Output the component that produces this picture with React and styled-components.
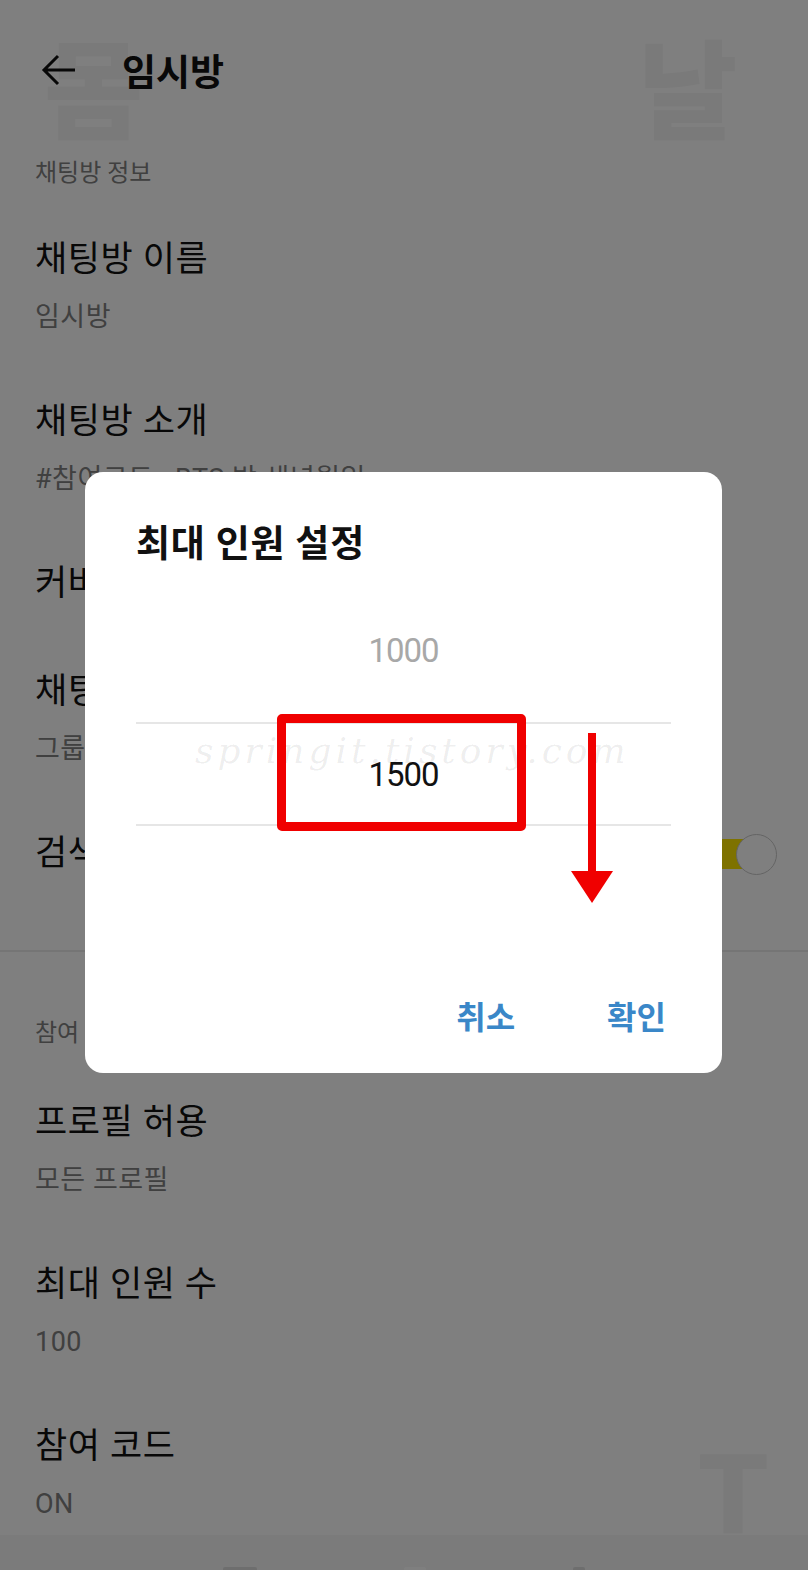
import * as React from "react";
import styled, { createGlobalStyle } from "styled-components";

const GlobalStyle = createGlobalStyle`
  html, body {
    margin: 0;
    padding: 0;
    background: #808080;
  }
  * {
    box-sizing: border-box;
  }
`;

const font = `Roboto, "Noto Sans CJK KR", "Noto Sans", sans-serif`;

const Screen = styled.div`
  position: relative;
  width: 808px;
  height: 1570px;
  overflow: hidden;
  background: #ffffff;
  font-family: ${font};
  color: #111111;
`;

const Header = styled.header`
  height: 140px;
  display: flex;
  align-items: center;
  padding-left: 40px;
  gap: 44px;
`;

const BackButton = styled.button`
  width: 38px;
  height: 38px;
  padding: 0;
  border: 0;
  background: transparent;
  display: flex;
  align-items: center;
  justify-content: center;
`;

const Title = styled.h1`
  margin: 0;
  font-size: 37px;
  font-weight: 700;
`;

const SectionLabel = styled.div`
  padding: ${(p) => (p.$first ? "19px" : "67px")} 35px ${(p) => (p.$first ? "19px" : "22px")};
  font-size: 24px;
  line-height: 28px;
  color: #808080;
`;

const Item = styled.div`
  display: flex;
  align-items: center;
  justify-content: space-between;
  padding: 34px 33px 34px 35px;
`;

const ItemText = styled.div`
  display: flex;
  flex-direction: column;
  gap: 20px;
`;

const ItemTitle = styled.div`
  font-size: 35px;
  line-height: 40px;
  letter-spacing: 0.6px;
  white-space: nowrap;
`;

const ItemValue = styled.div`
  font-size: 27px;
  line-height: 34px;
  letter-spacing: 0.5px;
  color: #808080;
  white-space: nowrap;
`;

const Toggle = styled.div`
  width: 78px;
  height: 30px;
  border-radius: 15px;
  background: #fde500;
  display: flex;
  align-items: center;
  justify-content: flex-end;
`;

const Knob = styled.span`
  width: 41px;
  height: 41px;
  margin-right: -2px;
  border-radius: 50%;
  background: #ffffff;
  border: 1.5px solid #c8c8c8;
`;

const Divider = styled.hr`
  margin: 42px 0 0;
  border: 0;
  height: 2px;
  background: #eaeaea;
`;

const Ghost = styled.span`
  position: absolute;
  left: ${(p) => p.$x}px;
  top: ${(p) => p.$y}px;
  font-size: ${(p) => p.$size}px;
  line-height: 1;
  font-weight: 900;
  color: rgba(0, 0, 0, 0.045);
  pointer-events: none;
`;

const NavBar = styled.div`
  position: absolute;
  left: 0;
  right: 0;
  bottom: 0;
  height: 35px;
  background: #f6f6f6;
  display: flex;
  align-items: flex-end;
  justify-content: space-around;
  padding: 0 150px;
`;

const NavMark = styled.span`
  width: ${(p) => p.$w}px;
  height: 3px;
  border-radius: 2px 2px 0 0;
  background: ${(p) => (p.$light ? "#ffffff" : "#dcdcdc")};
`;

const Scrim = styled.div`
  position: absolute;
  inset: 0;
  background: rgba(0, 0, 0, 0.5);
`;

const Dialog = styled.div`
  position: absolute;
  left: 85px;
  top: 472px;
  width: 637px;
  height: 601px;
  background: #ffffff;
  border-radius: 18px;
  padding: 52px 51px 35px;
  display: flex;
  flex-direction: column;
`;

const DialogTitle = styled.h2`
  margin: 0;
  font-size: 37px;
  line-height: 42px;
  letter-spacing: 0.8px;
  font-weight: 700;
`;

const Picker = styled.div`
  position: relative;
  margin-top: 52px;
  display: flex;
  flex-direction: column;
`;

const PickerRow = styled.div`
  height: 104px;
  display: flex;
  align-items: center;
  justify-content: center;
  font-family: Roboto, sans-serif;
  font-size: 33px;
  letter-spacing: -1px;
  color: ${(p) => (p.$selected ? "#111111" : "#a8a8a8")};
  padding-bottom: ${(p) => (p.$selected ? "0" : "40px")};
  border-top: ${(p) => (p.$selected ? "2px solid #e6e6e6" : "0")};
  border-bottom: ${(p) => (p.$selected ? "2px solid #e6e6e6" : "0")};
`;

const Watermark = styled.span`
  position: absolute;
  left: 59px;
  top: 112px;
  font-family: "DejaVu Serif", serif;
  font-style: italic;
  font-weight: 200;
  font-size: 36px;
  letter-spacing: 4px;
  color: rgba(0, 0, 0, 0.07);
  white-space: nowrap;
  pointer-events: none;
`;

const HighlightBox = styled.div`
  position: absolute;
  left: 141px;
  top: 96px;
  width: 249px;
  height: 117px;
  border: 9px solid #f00000;
  border-radius: 5px;
  pointer-events: none;
`;

const Arrow = styled.svg`
  position: absolute;
  left: 434px;
  top: 115px;
  pointer-events: none;
`;

const Actions = styled.div`
  margin-top: auto;
  display: flex;
  justify-content: flex-end;
  gap: 92px;
  padding-right: 5px;
`;

const ActionButton = styled.button`
  padding: 0;
  border: 0;
  background: transparent;
  font-family: ${font};
  font-size: 32px;
  line-height: 40px;
  font-weight: 700;
  color: #3a87c8;
`;

const topItems = [
  { title: "채팅방 이름", value: "임시방" },
  { title: "채팅방 소개", value: "#참여코드 : BTS 방 생년월일" },
  { title: "커버 이미지" },
  { title: "채팅방 종류", value: "그룹 채팅방" },
];

const bottomItems = [
  { title: "프로필 허용", value: "모든 프로필" },
  { title: "최대 인원 수", value: "100" },
  { title: "참여 코드", value: "ON" },
];

const SettingItem = ({ title, value, children }) => (
  <Item>
    <ItemText>
      <ItemTitle>{title}</ItemTitle>
      {value && <ItemValue>{value}</ItemValue>}
    </ItemText>
    {children}
  </Item>
);

export default function App() {
  return (
    <>
      <GlobalStyle />
      <Screen>
        <Header>
          <BackButton aria-label="뒤로">
            <svg width="38" height="38" viewBox="0 0 38 38" fill="none">
              <path d="M35 19H4M18 5L4 19l14 14" stroke="#111" strokeWidth="3" />
            </svg>
          </BackButton>
          <Title>임시방</Title>
        </Header>

        <SectionLabel $first>채팅방 정보</SectionLabel>
        {topItems.map((item) => (
          <SettingItem key={item.title} {...item} />
        ))}
        <SettingItem title="검색 허용">
          <Toggle>
            <Knob />
          </Toggle>
        </SettingItem>
        <Divider />

        <SectionLabel>참여 설정</SectionLabel>
        {bottomItems.map((item) => (
          <SettingItem key={item.title} {...item} />
        ))}

        <Ghost $x={44} $y={40} $size={108}>몸</Ghost>
        <Ghost $x={638} $y={40} $size={108}>날</Ghost>
        <Ghost $x={698} $y={1440} $size={112}>T</Ghost>

        <NavBar>
          <NavMark $w={34} />
          <NavMark $w={22} $light />
          <NavMark $w={12} />
        </NavBar>

        <Scrim />

        <Dialog>
          <DialogTitle>최대 인원 설정</DialogTitle>
          <Picker>
            <PickerRow>1000</PickerRow>
            <PickerRow $selected>1500</PickerRow>
            <Watermark>springit.tistory.com</Watermark>
            <HighlightBox />
            <Arrow width="44" height="170" viewBox="0 0 44 170">
              <rect x="18" y="0" width="8" height="140" fill="#f00000" />
              <polygon points="1,138 43,138 22,170" fill="#f00000" />
            </Arrow>
          </Picker>
          <Actions>
            <ActionButton>취소</ActionButton>
            <ActionButton>확인</ActionButton>
          </Actions>
        </Dialog>
      </Screen>
    </>
  );
}
